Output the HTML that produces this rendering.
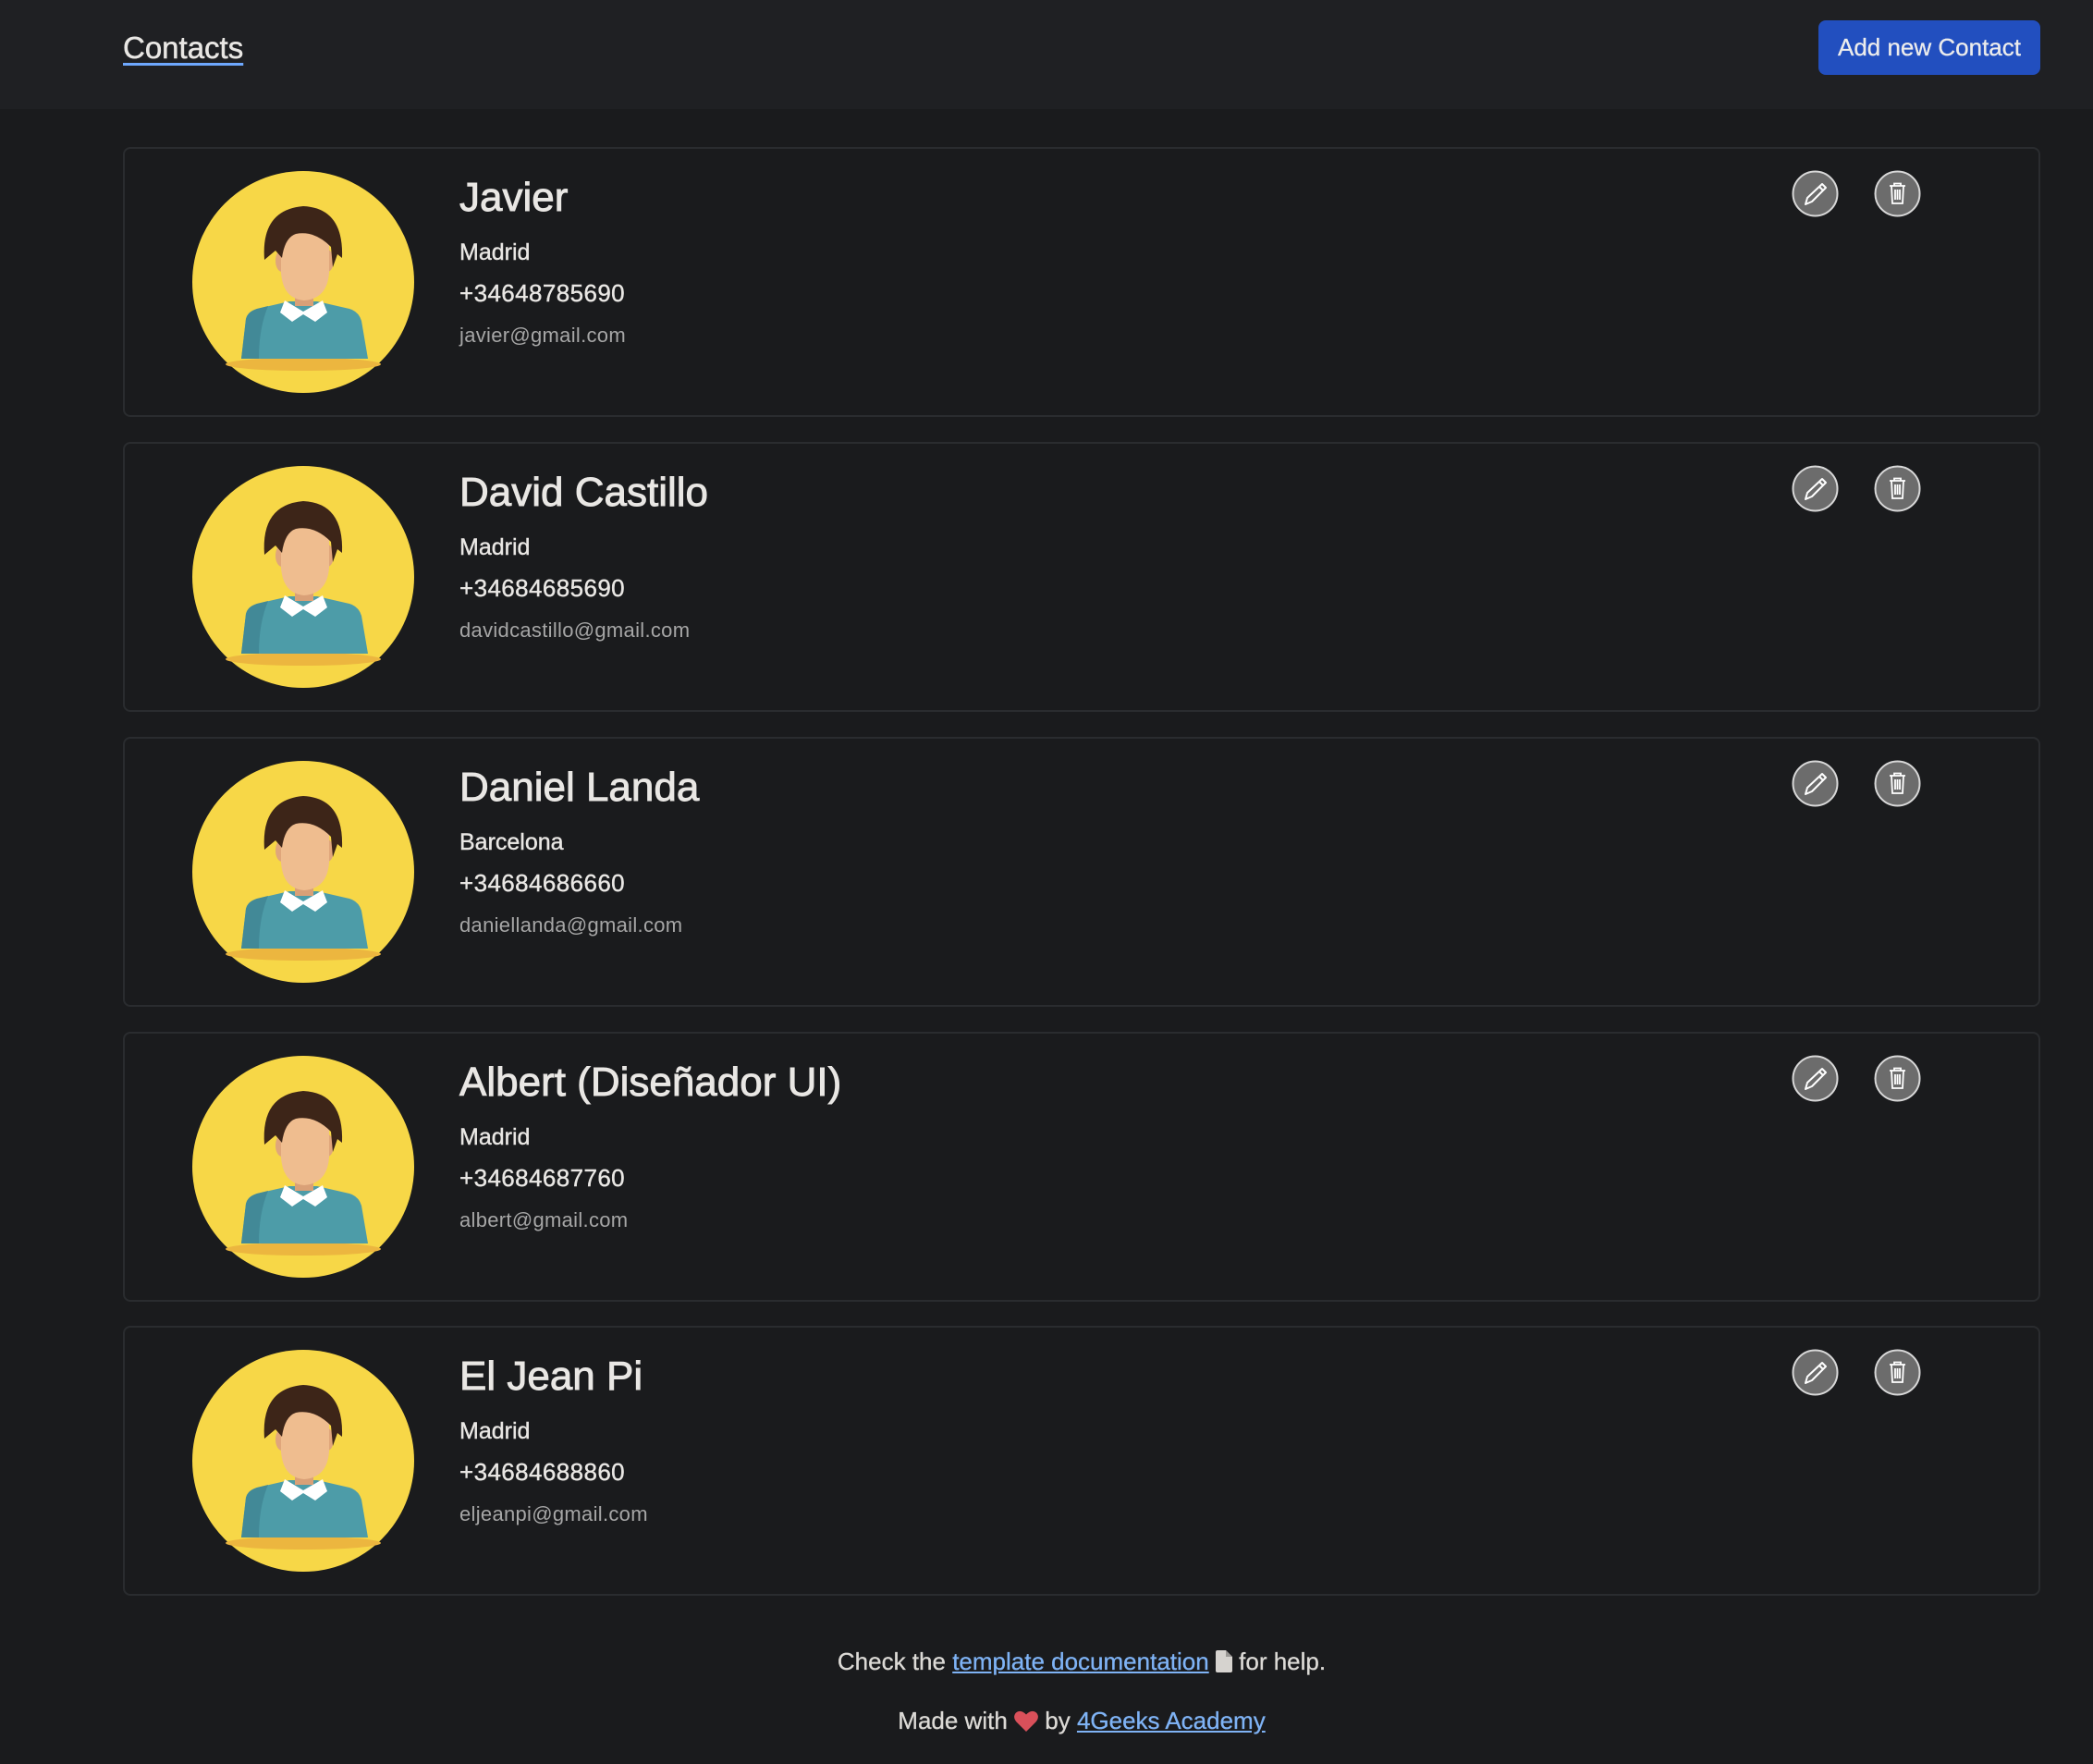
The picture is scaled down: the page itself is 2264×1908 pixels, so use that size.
<!DOCTYPE html>
<html><head><meta charset="utf-8"><style>
*{margin:0;padding:0;box-sizing:border-box}
body{width:2264px;height:1908px;background:#1a1b1d;font-family:"Liberation Sans",Arial,sans-serif;color:#e9e7e4;position:relative;overflow:hidden}
.hdr{position:absolute;left:0;top:0;width:2264px;height:118px;background:#1f2023}
.brand{position:absolute;left:133px;top:33px;font-size:33px;color:#e9e7e4;text-decoration:underline;text-decoration-color:#6ea8fe;text-underline-offset:5px;text-decoration-thickness:3px;-webkit-text-stroke:0.5px #e9e7e4}
.btn{position:absolute;left:1967px;top:22px;width:240px;height:59px;background:#224fbf;border-radius:8px;color:#ececec;font-size:26px;line-height:59px;text-align:center;-webkit-text-stroke:0.3px #ececec}
.card{position:absolute;left:133px;width:2074px;height:292px;border:2px solid #2a2c2f;border-radius:8px}
.av{position:absolute;left:73px;top:24px;width:240px;height:240px}
.t{position:absolute;left:362px;white-space:nowrap}
.n{top:25px;font-size:44px;line-height:56px;-webkit-text-stroke:0.9px #e9e7e4}
.c{top:96px;font-size:25px;line-height:32px;-webkit-text-stroke:0.4px #e9e7e4}
.p{top:140px;font-size:26px;line-height:32px;-webkit-text-stroke:0.4px #e9e7e4;letter-spacing:0.4px}
.e{top:187px;font-size:22px;line-height:30px;color:#a6a6a6;letter-spacing:0.3px}
.ic{position:absolute;top:23px;width:51px;height:51px}
.f{position:absolute;left:76px;width:2188px;text-align:center;font-size:26px;color:#dcdad6;-webkit-text-stroke:0.3px #dcdad6}
.f a{color:#7fb3f5;text-decoration:underline;-webkit-text-stroke:0.3px #7fb3f5}
</style></head><body>
<svg width="0" height="0" style="position:absolute">
<defs>
<symbol id="av" viewBox="0 0 240 240">
<circle cx="120" cy="120" r="120" fill="#f7d747"/>
<ellipse cx="120" cy="209" rx="84" ry="7" fill="#ecb63f"/>
<path d="M53 203 L58 160 Q60 152 70 149 L105 141 L135 141 L170 149 Q180 152 183 162 L190 203 Z" fill="#4d9ca8"/>
<path d="M53 203 L58 160 Q60 152 70 149 L82 146 Q72 170 72 203 Z" fill="#428997"/>
<rect x="111" y="122" width="20" height="24" fill="#d9a077"/>
<path d="M100 140 L120 152 L141 140 L146 153 L133 163 L120 155 L108 163 L95 153 Z" fill="#fff"/>
<ellipse cx="97" cy="97" rx="7" ry="12" fill="#e0a67b"/>
<ellipse cx="146" cy="97" rx="7" ry="12" fill="#e0a67b"/>
<path d="M96 72 Q96 58 121 58 Q148 58 148 75 L148 110 Q146 138 121 140 Q98 138 96 110 Z" fill="#efbd8f"/>
<path d="M78 96 Q74 42 120 38 Q164 40 162 94 L157 90 L152 104 L150 82 Q132 64 112 68 Q100 72 97 94 L90 86 Z" fill="#3d2518"/>
</symbol>
<symbol id="pen" viewBox="0 0 51 51">
<circle cx="25.5" cy="25.5" r="24" fill="#6c6c6c" stroke="#d8d8d8" stroke-width="2"/>
<path d="M33 15 L37 19 L22 34 L15 37 L17 30 Z M30 18 L34 22" fill="none" stroke="#fff" stroke-width="2" stroke-linejoin="round"/>
</symbol>
<symbol id="trash" viewBox="0 0 51 51">
<circle cx="25.5" cy="25.5" r="24" fill="#6c6c6c" stroke="#d8d8d8" stroke-width="2"/>
<path d="M17 17 H34 M22 17 V14.5 H29 V17 M19 17 L20 36 H31 L32 17 M23 21 V32 M25.5 21 V32 M28 21 V32" fill="none" stroke="#fff" stroke-width="1.8"/>
</symbol>
</defs></svg>

<div class="hdr"><span class="brand">Contacts</span><div class="btn">Add new Contact</div></div>

<div class="card" style="top:159px"><svg class="av"><use href="#av"/></svg>
<div class="t n">Javier</div><div class="t c">Madrid</div><div class="t p">+34648785690</div><div class="t e">javier@gmail.com</div>
<svg class="ic" style="left:1803px"><use href="#pen"/></svg><svg class="ic" style="left:1892px"><use href="#trash"/></svg></div>

<div class="card" style="top:478px"><svg class="av"><use href="#av"/></svg>
<div class="t n">David Castillo</div><div class="t c">Madrid</div><div class="t p">+34684685690</div><div class="t e">davidcastillo@gmail.com</div>
<svg class="ic" style="left:1803px"><use href="#pen"/></svg><svg class="ic" style="left:1892px"><use href="#trash"/></svg></div>

<div class="card" style="top:797px"><svg class="av"><use href="#av"/></svg>
<div class="t n">Daniel Landa</div><div class="t c">Barcelona</div><div class="t p">+34684686660</div><div class="t e">daniellanda@gmail.com</div>
<svg class="ic" style="left:1803px"><use href="#pen"/></svg><svg class="ic" style="left:1892px"><use href="#trash"/></svg></div>

<div class="card" style="top:1116px"><svg class="av"><use href="#av"/></svg>
<div class="t n">Albert (Diseñador UI)</div><div class="t c">Madrid</div><div class="t p">+34684687760</div><div class="t e">albert@gmail.com</div>
<svg class="ic" style="left:1803px"><use href="#pen"/></svg><svg class="ic" style="left:1892px"><use href="#trash"/></svg></div>

<div class="card" style="top:1434px"><svg class="av"><use href="#av"/></svg>
<div class="t n">El Jean Pi</div><div class="t c">Madrid</div><div class="t p">+34684688860</div><div class="t e">eljeanpi@gmail.com</div>
<svg class="ic" style="left:1803px"><use href="#pen"/></svg><svg class="ic" style="left:1892px"><use href="#trash"/></svg></div>

<div class="f" style="top:1782px">Check the <a>template documentation</a> <svg width="18" height="24" viewBox="0 0 18 24" style="vertical-align:-3px"><path d="M2 0 H11 L18 7 V22 Q18 24 16 24 H2 Q0 24 0 22 V2 Q0 0 2 0 Z" fill="#d6d3cf"/><path d="M11 0 V7 H18" fill="#9a9895"/></svg> for help.</div>
<div class="f" style="top:1846px">Made with <svg width="26" height="23" viewBox="0 0 26 23" style="vertical-align:-3px"><path d="M13 23 L2.5 12.5 Q-2 7 2 2.5 Q7 -1.5 13 4.5 Q19 -1.5 24 2.5 Q28 7 23.5 12.5 Z" fill="#d9505a"/></svg> by <a>4Geeks Academy</a></div>
</body></html>
